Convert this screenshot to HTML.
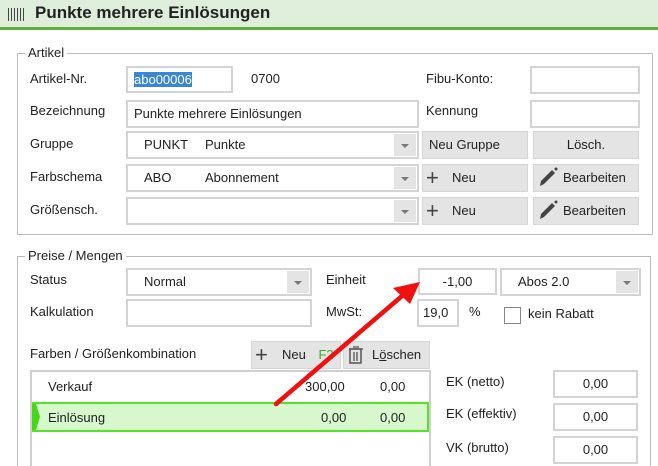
<!DOCTYPE html>
<html style="overflow:hidden;width:658px;height:466px"><head><meta charset="utf-8"><style>
*{box-sizing:border-box;margin:0;padding:0}
body{width:658px;height:466px;overflow:hidden;background:#fff;font-family:"Liberation Sans",sans-serif;font-size:13px;color:#222;position:relative}
.a{position:absolute;white-space:nowrap}
.hdr{left:0;top:0;width:658px;height:30px;background:#deeedb;border-bottom:3px solid #5fae3e}
.fs{position:absolute;border:1px solid #bbb}
.lg{position:absolute;background:#fff;padding:0 3px;font-size:13px}
.in{position:absolute;border:2px solid #d4d4d4;background:#fff;padding-left:6px;line-height:24px}
.cb{position:absolute;border:2px solid #d4d4d4;background:#fff;line-height:24px}
.cb .ar{position:absolute;right:1px;top:1px;bottom:1px;width:22px;background:#e4e4e4}
.cb .ar:after{content:"";position:absolute;left:7px;top:10px;border-left:4px solid transparent;border-right:4px solid transparent;border-top:4px solid #777}
.bt{position:absolute;background:#e4e4e4;border:1px solid #d6d6d6;line-height:26px}
</style></head><body>
<div class="a hdr"></div>
<div class="a" style="left:8px;top:8px;width:16px;height:13px;background:repeating-linear-gradient(90deg,#444 0 1px,transparent 1px 3px)"></div>
<div class="a" style="left:35px;top:3px;font-size:17px;font-weight:bold;color:#222">Punkte mehrere Einlösungen</div>

<div class="fs" style="left:17px;top:53px;width:636px;height:182px"></div>
<div class="lg" style="left:25px;top:45px">Artikel</div>

<div class="a" style="left:30px;top:71px">Artikel-Nr.</div>
<div class="in" style="left:126px;top:66px;width:107px;height:27px"><span style="background:#3a86d6;color:#fff">abo00006</span></div>
<div class="a" style="left:251px;top:71px">0700</div>
<div class="a" style="left:426px;top:71px">Fibu-Konto:</div>
<div class="in" style="left:530px;top:66px;width:110px;height:28px"></div>

<div class="a" style="left:30px;top:103px">Bezeichnung</div>
<div class="in" style="left:126px;top:100px;width:293px;height:28px">Punkte mehrere Einlösungen</div>
<div class="a" style="left:426px;top:103px">Kennung</div>
<div class="in" style="left:530px;top:100px;width:110px;height:28px"></div>

<div class="a" style="left:30px;top:136px">Gruppe</div>
<div class="cb" style="left:126px;top:131px;width:293px;height:28px"><span class="a" style="left:16px">PUNKT</span><span class="a" style="left:77px">Punkte</span><div class="ar"></div></div>
<div class="bt" style="left:422px;top:131px;width:106px;height:28px;padding-left:6px">Neu Gruppe</div>
<div class="bt" style="left:533px;top:131px;width:106px;height:28px;text-align:center">Lösch.</div>

<div class="a" style="left:30px;top:169px">Farbschema</div>
<div class="cb" style="left:126px;top:164px;width:293px;height:28px"><span class="a" style="left:16px">ABO</span><span class="a" style="left:77px">Abonnement</span><div class="ar"></div></div>
<div class="bt" style="left:422px;top:164px;width:106px;height:28px;padding-left:29px">Neu</div>
<div class="a" style="left:426px;top:169px;font-size:22px;line-height:18px;color:#444">+</div>
<div class="bt" style="left:533px;top:164px;width:106px;height:28px;padding-left:29px">Bearbeiten</div>
<svg class="a" style="left:537px;top:166px" width="22" height="22"><path d="M3 20 L4 15 L15 4 L18 7 L7 18 Z" fill="#444"/><circle cx="19" cy="3" r="1.5" fill="#444"/></svg>

<div class="a" style="left:30px;top:202px">Größensch.</div>
<div class="cb" style="left:126px;top:197px;width:293px;height:28px"><div class="ar"></div></div>
<div class="bt" style="left:422px;top:197px;width:106px;height:28px;padding-left:29px">Neu</div>
<div class="a" style="left:426px;top:202px;font-size:22px;line-height:18px;color:#444">+</div>
<div class="bt" style="left:533px;top:197px;width:106px;height:28px;padding-left:29px">Bearbeiten</div>
<svg class="a" style="left:537px;top:199px" width="22" height="22"><path d="M3 20 L4 15 L15 4 L18 7 L7 18 Z" fill="#444"/><circle cx="19" cy="3" r="1.5" fill="#444"/></svg>

<div class="fs" style="left:17px;top:256px;width:634px;height:210px;border-bottom:none"></div>
<div class="lg" style="left:25px;top:248px">Preise / Mengen</div>

<div class="a" style="left:30px;top:272px">Status</div>
<div class="cb" style="left:126px;top:268px;width:186px;height:28px"><span class="a" style="left:16px">Normal</span><div class="ar"></div></div>
<div class="a" style="left:326px;top:272px">Einheit</div>
<div class="in" style="left:418px;top:268px;width:79px;height:27px;text-align:center;padding:0">-1,00</div>
<div class="cb" style="left:500px;top:268px;width:141px;height:28px"><span class="a" style="left:16px">Abos 2.0</span><div class="ar"></div></div>

<div class="a" style="left:30px;top:304px">Kalkulation</div>
<div class="in" style="left:126px;top:299px;width:186px;height:28px"></div>
<div class="a" style="left:326px;top:304px">MwSt:</div>
<div class="in" style="left:417px;top:299px;width:42px;height:28px;padding-left:4px">19,0</div>
<div class="a" style="left:469px;top:304px">%</div>
<div class="a" style="left:504px;top:307px;width:17px;height:17px;border:1.5px solid #888;background:#fff"></div>
<div class="a" style="left:528px;top:306px">kein Rabatt</div>

<div class="a" style="left:30px;top:346px">Farben / Größenkombination</div>
<div class="bt" style="left:251px;top:341px;width:90px;height:28px;padding-left:30px">Neu <span style="color:#3aae2a;margin-left:9px">F2</span></div>
<div class="a" style="left:255px;top:346px;font-size:22px;line-height:18px;color:#444">+</div>
<div class="bt" style="left:343px;top:341px;width:87px;height:28px;padding-left:28px">L<u>ö</u>schen</div>
<svg class="a" style="left:348px;top:345px" width="16" height="20"><rect x="2" y="4" width="11" height="14" fill="none" stroke="#555" stroke-width="1.5"/><path d="M1 4h14M5 2h6M6 7v9M9 7v9" stroke="#555" stroke-width="1.3"/></svg>

<div class="a" style="left:30px;top:370px;width:401px;height:96px;border:2px solid #d0d0d0;border-bottom:none;background:#fff"></div>
<div class="a" style="left:48px;top:379px">Verkauf</div>
<div class="a" style="left:305px;top:379px">300,00</div>
<div class="a" style="left:380px;top:379px">0,00</div>
<div class="a" style="left:32px;top:402px;width:397px;height:30px;background:#d6f8cc;border:2px solid #55e326"></div>
<div class="a" style="left:32px;top:404px;width:4px;height:26px;background:#44d818"></div>
<div class="a" style="left:36px;top:404px;width:0;height:0;border-top:13px solid transparent;border-bottom:13px solid transparent;border-left:4px solid #44d818"></div>
<div class="a" style="left:48px;top:410px">Einlösung</div>
<div class="a" style="left:321px;top:410px">0,00</div>
<div class="a" style="left:380px;top:410px">0,00</div>

<div class="a" style="left:446px;top:374px">EK (netto)</div>
<div class="in" style="left:553px;top:370px;width:85px;height:28px;text-align:center;padding:0">0,00</div>
<div class="a" style="left:446px;top:406px">EK (effektiv)</div>
<div class="in" style="left:553px;top:403px;width:85px;height:28px;text-align:center;padding:0">0,00</div>
<div class="a" style="left:446px;top:440px">VK (brutto)</div>
<div class="in" style="left:553px;top:436px;width:85px;height:28px;text-align:center;padding:0">0,00</div>

<svg class="a" style="left:0;top:0" width="658" height="466"><line x1="276" y1="404" x2="402" y2="296" stroke="#f01010" stroke-width="4.5" stroke-linecap="round"/><polygon points="420,282 393,288 410,304" fill="#f01010"/></svg>
</body></html>
